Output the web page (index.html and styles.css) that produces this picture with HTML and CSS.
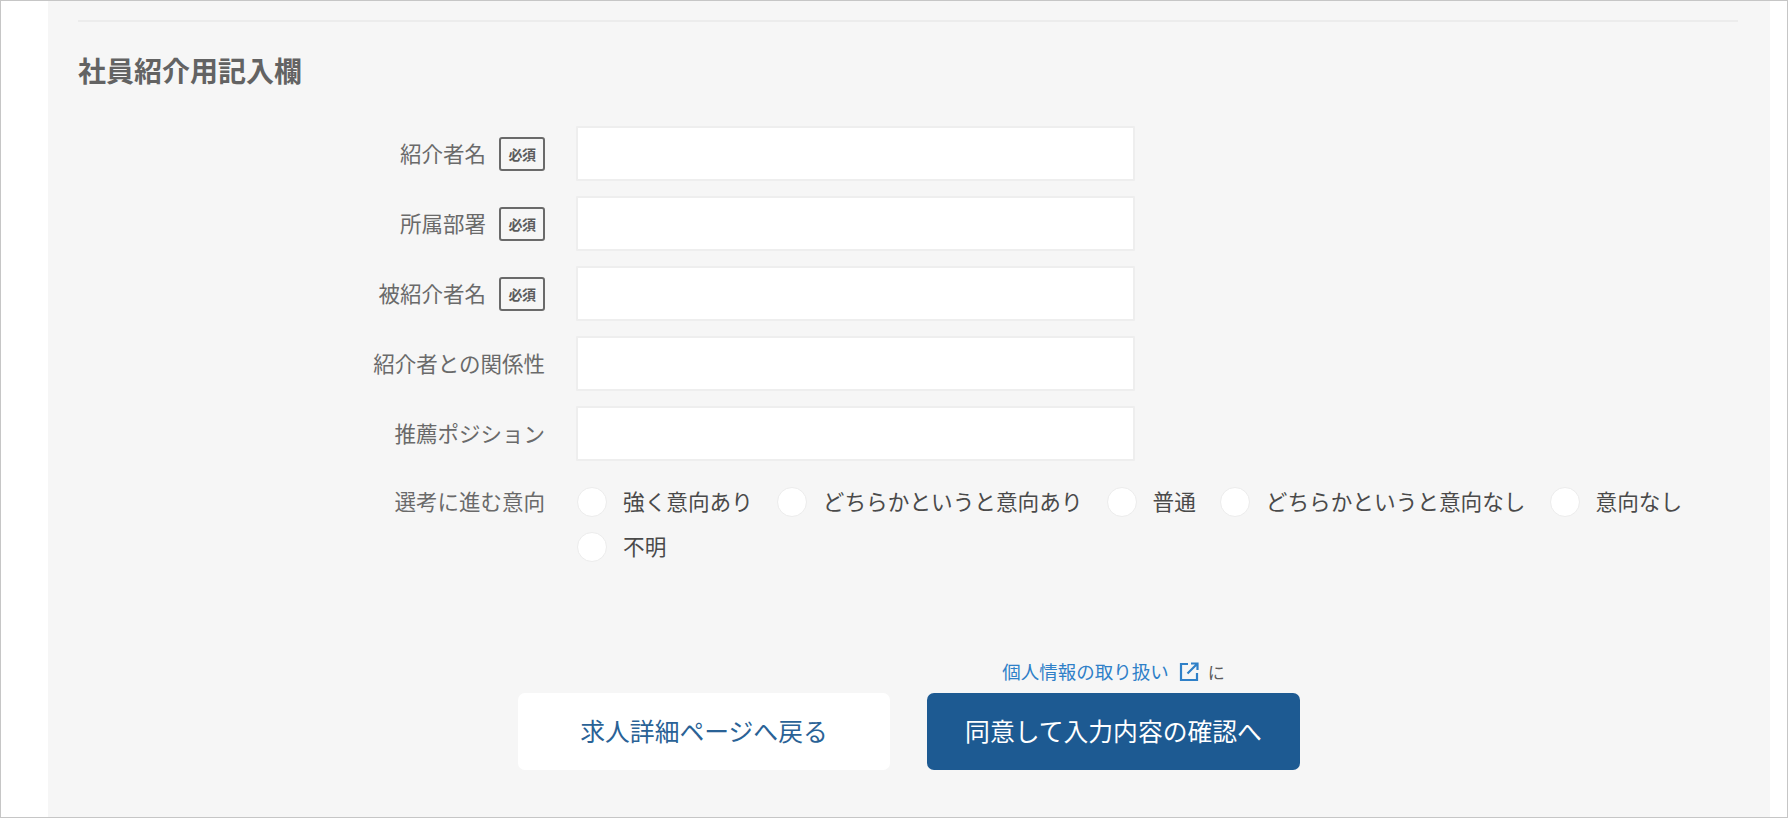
FILE: index.html
```html
<!DOCTYPE html>
<html lang="ja">
<head>
<meta charset="utf-8">
<title>社員紹介用記入欄</title>
<link rel="stylesheet" href="styles.css">
</head>
<body>
<div class="frame">
  <main class="panel">
    <hr class="rule">
    <h2 class="title">社員紹介用記入欄</h2>
    <form class="form">
      <div class="row">
        <div class="label"><span class="label-text">紹介者名</span><span class="badge">必須</span></div>
        <input class="field" type="text">
      </div>
      <div class="row">
        <div class="label"><span class="label-text">所属部署</span><span class="badge">必須</span></div>
        <input class="field" type="text">
      </div>
      <div class="row">
        <div class="label"><span class="label-text">被紹介者名</span><span class="badge">必須</span></div>
        <input class="field" type="text">
      </div>
      <div class="row">
        <div class="label"><span class="label-text">紹介者との関係性</span></div>
        <input class="field" type="text">
      </div>
      <div class="row">
        <div class="label"><span class="label-text">推薦ポジション</span></div>
        <input class="field" type="text">
      </div>
      <div class="row row-radio">
        <div class="label label-radio"><span>選考に進む意向</span></div>
        <div class="options">
          <label class="option"><input class="radio" type="radio" name="intent"><span class="option-text">強く意向あり</span></label>
          <label class="option"><input class="radio" type="radio" name="intent"><span class="option-text">どちらかというと意向あり</span></label>
          <label class="option"><input class="radio" type="radio" name="intent"><span class="option-text">普通</span></label>
          <label class="option"><input class="radio" type="radio" name="intent"><span class="option-text">どちらかというと意向なし</span></label>
          <label class="option"><input class="radio" type="radio" name="intent"><span class="option-text">意向なし</span></label>
          <label class="option"><input class="radio" type="radio" name="intent"><span class="option-text">不明</span></label>
        </div>
      </div>
      <div class="actions">
        <button class="btn btn-back" type="button">求人詳細ページへ戻る</button>
        <div class="submit-col">
          <p class="note"><a class="note-link" href="#"><span class="note-text">個人情報の取り扱い</span><svg class="ext" viewBox="0 0 20 20" aria-hidden="true"><path d="M9 2H2v16h16v-7M12 1.500h6.500V8M18 2 8.500 11.500"/></svg></a><span class="note-tail">に</span></p>
          <button class="btn btn-primary" type="button">同意して入力内容の確認へ</button>
        </div>
      </div>
    </form>
  </main>
</div>
</body>
</html>
```

FILE: styles.css
```css
* { box-sizing: border-box; }
html, body { margin: 0; padding: 0; height: 100%; }
body {
  background: #fff;
  font-family: "Noto Sans CJK JP", "Liberation Sans", sans-serif;
  color: #444;
}
.frame {
  height: 818px;
  border: 1px solid #c6c6c6;
  padding: 0 17px 0 47px;
  overflow: hidden;
}
.panel {
  height: 100%;
  background: #f6f6f6;
  padding: 19px 32px 0 30px;
}
.rule {
  margin: 0;
  border: 0;
  border-top: 2px solid #ececec;
}
.title {
  margin: 26px 0 0;
  font-size: 28px;
  line-height: 44px;
  font-weight: 700;
  color: #636363;
}
.form { margin-top: 34px; }
.row {
  display: flex;
  gap: 31px;
  margin-bottom: 15px;
}
.label {
  width: 467px;
  flex: none;
  display: flex;
  justify-content: flex-end;
  align-items: center;
  gap: 13px;
  font-size: 21.500px;
  color: #6a6a6a;
}
.label-text { padding-bottom: 2px; }
.label-radio {
  align-items: flex-start;
  line-height: 28px;
}
.badge {
  width: 46px;
  height: 34px;
  margin-top: 1px;
  border: 2px solid #6a6a6a;
  border-radius: 3px;
  font-size: 14px;
  font-weight: 700;
  color: #5c5c5c;
  display: flex;
  align-items: center;
  justify-content: center;
  letter-spacing: -0.5px;
}
.field {
  width: 559px;
  height: 55px;
  flex: none;
  background: #fff;
  border: 2px solid #eeeeee;
  border-radius: 1px;
}
.row-radio {
  gap: 32px;
  margin: 26px 0 0;
}
.options {
  flex: 1;
  display: flex;
  flex-wrap: wrap;
  column-gap: 24px;
  row-gap: 15px;
}
.option {
  display: flex;
  align-items: center;
  gap: 16px;
  height: 30px;
  font-size: 21.650px;
  color: #4a4a4a;
}
.option-text { padding-bottom: 3px; }
.radio {
  appearance: none;
  width: 30px;
  height: 30px;
  margin: 0;
  flex: none;
  background: #fff;
  border: 1px solid #ececec;
  border-radius: 50%;
}
.actions {
  display: flex;
  justify-content: center;
  align-items: flex-end;
  gap: 37px;
  margin-top: 98px;
  padding-left: 2px;
}
.btn {
  height: 77px;
  border: 0;
  border-radius: 7px;
  padding: 0 0 3px;
  font-family: inherit;
  font-size: 24.800px;
}
.btn-back {
  width: 372px;
  background: #fff;
  color: #2a6296;
}
.btn-primary {
  width: 373px;
  background: #1d5a92;
  color: #fff;
}
.submit-col {
  display: flex;
  flex-direction: column;
  align-items: center;
}
.note {
  margin: 0 0 9px;
  display: flex;
  align-items: center;
  height: 24px;
  font-size: 18.500px;
}
.note-link {
  display: flex;
  align-items: center;
  gap: 10px;
  color: #2f80c8;
  text-decoration: none;
}
.note-text { padding-bottom: 2px; }
.ext {
  width: 20px;
  height: 20px;
  fill: none;
  stroke: #2f80c8;
  stroke-width: 2.200;
}
.note-tail {
  margin-left: 9px;
  padding-bottom: 2px;
  color: #5c5c5c;
  font-size: 17px;
}
```
